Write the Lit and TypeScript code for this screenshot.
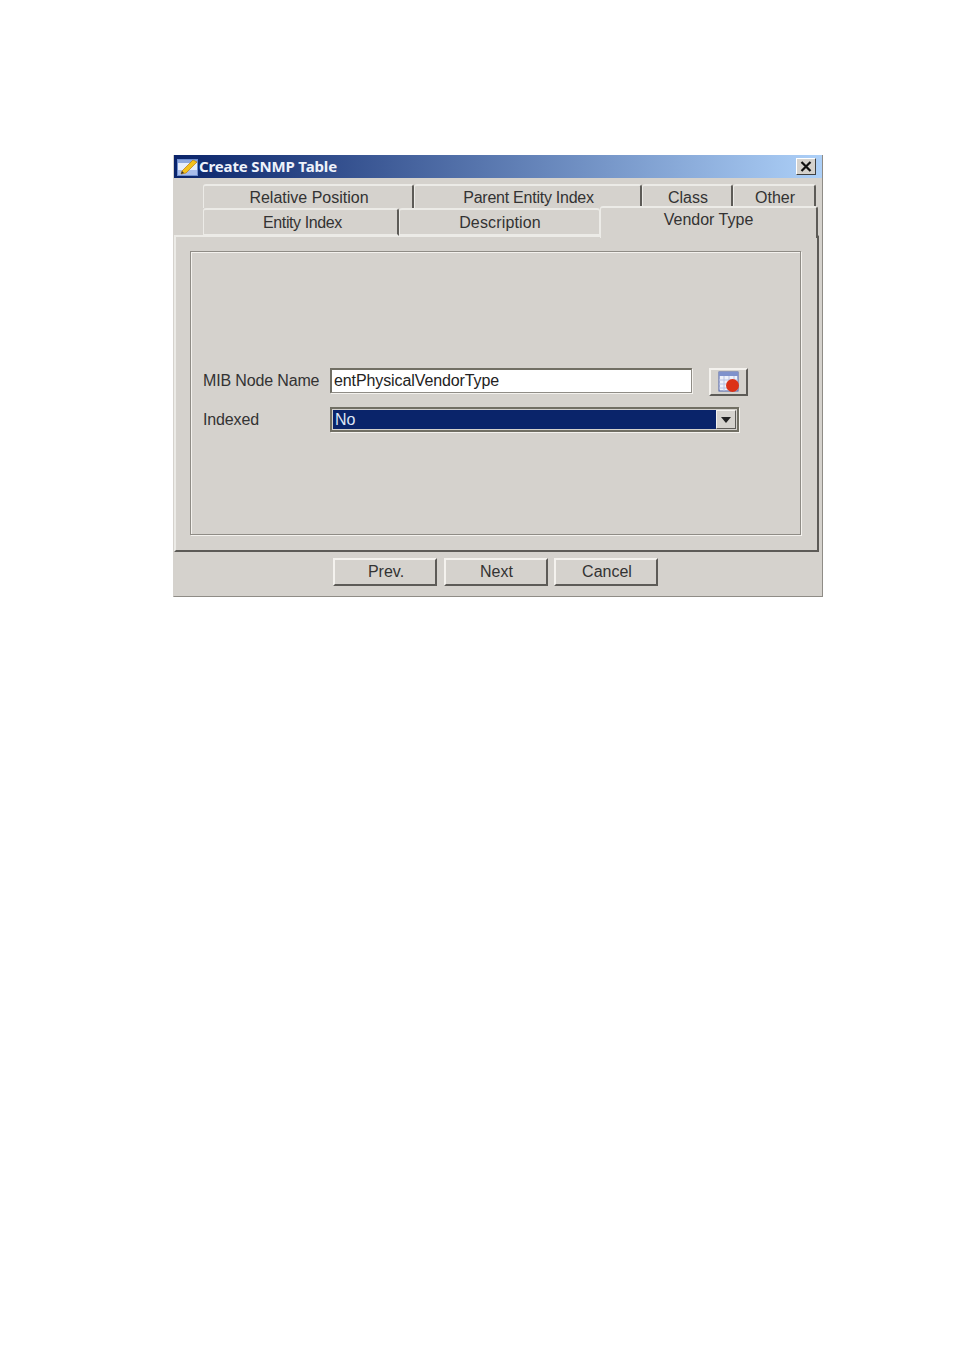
import { LitElement, html, css } from "lit";
import { customElement } from "lit/decorators.js";

@customElement("app-root")
export class AppRoot extends LitElement {
  static styles = css`
    :host { display: block; height: 1352px; background: #fff; padding: 155px 0 0 173px; box-sizing: border-box;
      font: 16px "Liberation Sans", Arial, sans-serif; color: #333; }
    .win { width: 650px; height: 442px; box-sizing: border-box; background: #d5d2cd; border: 1px solid #8f8c86; border-top: 0; border-left-color: #d5d2cd; }
    .title { height: 23px; display: flex; align-items: center; background: linear-gradient(90deg, #0a246a, #add0f8); color: #eef2fb; font: bold 15px "Noto Sans", sans-serif; letter-spacing: -0.15px; }
    .appicon { width: 22px; height: 20px; margin: 0 0 0 3px; flex: none; display: block; }
    .title span { flex: 1; padding-bottom: 2px; }
    .close { width: 20px; height: 17px; box-sizing: border-box; margin-right: 6px; background: #d5d2cd; border: 1px solid; border-color: #fff #404040 #404040 #fff; display: flex; align-items: center; justify-content: center; }
    .tabs { height: 57px; position: relative; }
    .row { display: flex; margin-left: 29px; }
    .r1 { padding-top: 6px; height: 24px; }
    .r2 { height: 28px; }
    .tab { box-sizing: border-box; text-align: center; padding-left: 2px; border-top: 2px solid #ecebe7; border-left: 1px solid #ecebe7; border-right: 2px solid #5d5b57; border-top-left-radius: 3px; border-top-right-radius: 3px; white-space: nowrap; }
    .r1 .tab { height: 24px; line-height: 23px; }
    .r2 .tab { height: 28px; line-height: 25px; border-bottom: 2px solid #ecebe7; }
    .relative { width: 211px; }
    .parent { width: 228px; letter-spacing: -0.25px; }
    .class-tab { width: 91px; }
    .other { width: 83px; }
    .entity { width: 196px; letter-spacing: -0.4px; padding-left: 4px; }
    .desc { width: 201px; border-right-color: #ecebe7 !important; border-right-width: 1px !important; padding-left: 1px; letter-spacing: 0.15px; }
    .tab.active { height: 32px !important; width: 218px; margin-top: -2px; line-height: 23px !important; border-bottom: 0 !important; position: relative; background: #d5d2cd; z-index: 1; padding-right: 2px; }
    .pane { box-sizing: border-box; width: 645px; height: 317px; border-top: 2px solid #ecebe7; border-left: 2px solid #ecebe7; border-right: 2px solid #5d5b57; border-bottom: 2px solid #5d5b57; padding: 14px 0 0 14px; }
    .group { width: 611px; height: 284px; box-sizing: border-box; border: 1px solid #8f8c86; box-shadow: 1px 1px 0 #f4f2ee, inset 1px 1px 0 #f4f2ee; padding: 116px 0 0 12px; }
    .field { display: flex; align-items: flex-start; }
    label { width: 127px; flex: none; line-height: 26px; letter-spacing: -0.15px; }
    .input { width: 362px; height: 25px; box-sizing: border-box; background: #fff; border: 1px solid #8f8c86; border-top: 2px solid #716f64; border-left: 2px solid #716f64; box-shadow: 1px 1px 0 #f4f2ee; padding-left: 2px; line-height: 21px; color: #222; letter-spacing: -0.1px; }
    .pick { width: 39px; height: 28px; box-sizing: border-box; margin-left: 17px; border: 2px solid; border-color: #f4f2ee #5d5b57 #5d5b57 #f4f2ee; display: flex; align-items: center; justify-content: center; }
    .field.sel { margin-top: 11px; }
    .select { width: 409px; height: 25px; box-sizing: border-box; border: 2px solid #716f64; box-shadow: 1px 1px 0 #f4f2ee; padding: 1px; display: flex; background: #d5d2cd; }
    .value { flex: 1; background: #0a246a; color: #dfe6f5; padding-left: 2px; line-height: 20px; }
    .arrow { width: 20px; box-sizing: border-box; border: 1px solid; border-color: #f4f2ee #5d5b57 #5d5b57 #f4f2ee; display: flex; align-items: center; justify-content: center; }
    .foot { display: flex; justify-content: center; gap: 6.5px; padding: 6px 0 0 0; margin-left: -5px; }
    button { font: inherit; color: inherit; width: 104px; height: 28px; padding: 0 0 0 2px; background: #d5d2cd; box-sizing: border-box; border: 2px solid; border-color: #f4f2ee #5d5b57 #5d5b57 #f4f2ee; }
  `;

  render() {
    return html`<div class="win">
      <div class="title">
        <svg class="appicon" viewBox="0 0 22 20">
          <rect x="0.5" y="2.5" width="20" height="16" fill="#e8eefa" stroke="#6f8fd0"/>
          <rect x="1" y="3" width="19" height="3" fill="#8fa8dc"/>
          <rect x="1" y="13" width="19" height="5" fill="#a9bdea"/>
          <path d="M5 14 L16 3 L20 5 L9 16 L4 17 Z" fill="#f5c21b" stroke="#b77a10" stroke-width="0.7"/>
          <path d="M4 17 L5 14 L7 16 Z" fill="#333"/>
        </svg>
        <span>Create SNMP Table</span>
        <div class="close"><svg width="12" height="11" viewBox="0 0 12 11"><path d="M1.5 1 L10.5 10 M10.5 1 L1.5 10" stroke="#111" stroke-width="2.2"/></svg></div>
      </div>
      <div class="tabs">
        <div class="row r1">
          <div class="tab relative">Relative Position</div>
          <div class="tab parent">Parent Entity Index</div>
          <div class="tab class-tab">Class</div>
          <div class="tab other">Other</div>
        </div>
        <div class="row r2">
          <div class="tab entity">Entity Index</div>
          <div class="tab desc">Description</div>
          <div class="tab active">Vendor Type</div>
        </div>
      </div>
      <div class="pane">
        <div class="group">
          <div class="field">
            <label>MIB Node Name</label>
            <div class="input">entPhysicalVendorType</div>
            <div class="pick">
              <svg width="22" height="22" viewBox="0 0 22 22">
                <rect x="1" y="1" width="19" height="19" fill="#eef1fa" stroke="#4a5fa8"/>
                <rect x="1" y="1" width="19" height="4" fill="#7f92cc"/>
                <path d="M1 9 H20 M1 13 H20 M1 17 H20 M6 5 V20 M11 5 V20 M16 5 V20" stroke="#b8c2e2"/>
                <circle cx="14.5" cy="14.5" r="6.5" fill="#dc3218"/>
              </svg>
            </div>
          </div>
          <div class="field sel">
            <label>Indexed</label>
            <div class="select">
              <div class="value">No</div>
              <div class="arrow"><svg width="10" height="6" viewBox="0 0 10 6"><path d="M0 0 H10 L5 6 Z" fill="#222"/></svg></div>
            </div>
          </div>
        </div>
      </div>
      <div class="foot">
        <button>Prev.</button><button>Next</button><button>Cancel</button>
      </div>
    </div>`;
  }
}
